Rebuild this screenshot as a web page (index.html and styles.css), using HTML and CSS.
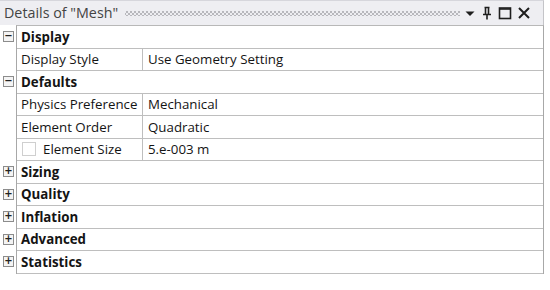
FILE: index.html
```html
<!DOCTYPE html>
<html>
<head>
<meta charset="utf-8">
<link rel="stylesheet" href="styles.css">
</head>
<body>
<div class="panel">
  <div class="titlebar">
    <span class="title">Details of "Mesh"</span>
    <span class="grip"></span>
    <div class="tools">
      <svg class="ico" width="12" height="12" viewBox="0 0 12 12"><path d="M1.5 4.5 H10.5 L6 9 Z" fill="#1e1e1e"/></svg>
      <svg class="ico" width="12" height="14" viewBox="0 0 12 14"><path d="M3.5 1.5 H8.5 M4.5 1.5 V8 M7.5 1.5 V8 M2 8.5 H10 M6 8.5 V13.5" stroke="#1e1e1e" stroke-width="1.6" fill="none"/></svg>
      <svg class="ico" width="14" height="14" viewBox="0 0 14 14"><rect x="1.5" y="2" width="11" height="10.5" stroke="#1e1e1e" stroke-width="1.6" fill="none"/><path d="M1.5 3 H12.5" stroke="#1e1e1e" stroke-width="1.6"/></svg>
      <svg class="ico" width="14" height="14" viewBox="0 0 14 14"><path d="M2 2 L12 12 M12 2 L2 12" stroke="#1e1e1e" stroke-width="2" fill="none"/></svg>
    </div>
  </div>
  <div class="body">
    <div class="grid">
      <div class="row head"><span class="box">&minus;</span><div class="cell full">Display</div></div>
      <div class="row"><div class="cell name">Display Style</div><div class="cell val">Use Geometry Setting</div></div>
      <div class="row head"><span class="box">&minus;</span><div class="cell full">Defaults</div></div>
      <div class="row"><div class="cell name">Physics Preference</div><div class="cell val">Mechanical</div></div>
      <div class="row"><div class="cell name">Element Order</div><div class="cell val">Quadratic</div></div>
      <div class="row"><div class="cell name"><span class="check"></span>Element Size</div><div class="cell val">5.e-003 m</div></div>
      <div class="row head"><span class="box">+</span><div class="cell full">Sizing</div></div>
      <div class="row head"><span class="box">+</span><div class="cell full">Quality</div></div>
      <div class="row head"><span class="box">+</span><div class="cell full">Inflation</div></div>
      <div class="row head"><span class="box">+</span><div class="cell full">Advanced</div></div>
      <div class="row head"><span class="box">+</span><div class="cell full">Statistics</div></div>
    </div>
  </div>
</div>
</body>
</html>
```

FILE: styles.css
```css
html, body {
  margin: 0;
  padding: 0;
  background: #ffffff;
}
body {
  font-family: "Open Sans", "Noto Sans", sans-serif;
  font-size: 13.3px;
  color: #141414;
  width: 550px;
  height: 290px;
  overflow: hidden;
}
.panel {
  width: 544px;
}
.titlebar {
  height: 24px;
  background: #eeeef2;
  border-top: 1px solid #d6d6dc;
  border-right: 1px solid #c4c4c8;
  display: flex;
  align-items: center;
  padding-left: 4px;
}
.title {
  font-size: 14.3px;
  color: #444444;
  white-space: nowrap;
  margin-top: -1px;
}
.grip {
  flex: 1;
  height: 5px;
  margin: 0 4px 0 7px;
  background-image:
    radial-gradient(circle, #b8b8bd 0.9px, transparent 1.1px),
    radial-gradient(circle, #b8b8bd 0.9px, transparent 1.1px);
  background-size: 4px 4px, 4px 4px;
  background-position: 0 -1px, 2px 1px;
}
.tools {
  display: flex;
  align-items: center;
  gap: 5px;
  padding-right: 12px;
}
.ico {
  display: block;
}
.body {
  padding-left: 16px;
  position: relative;
}
.grid {
  border-left: 1px solid #a8a8a8;
  border-right: 1px solid #a8a8a8;
  border-top: 1px solid #b8b8b8;
  background: #fff;
}
.row {
  height: 21.5px;
  border-bottom: 1.5px solid #bebebe;
  display: flex;
  align-items: stretch;
  position: relative;
}
.head .full {
  font-weight: 700;
  padding-left: 4px;
  display: flex;
  align-items: center;
}
.box {
  position: absolute;
  left: -14px;
  top: 5px;
  width: 9px;
  height: 9px;
  border: 1px solid #8c8c8c;
  background: #f4f4f4;
  font-size: 10px;
  line-height: 8px;
  text-align: center;
  font-weight: 700;
  color: #222;
  font-family: "DejaVu Sans", sans-serif;
}
.cell {
  display: flex;
  align-items: center;
  white-space: nowrap;
}
.name {
  width: 121px;
  padding-left: 4px;
  border-right: 1.5px solid #bebebe;
}
.val {
  padding-left: 5px;
}
.check {
  width: 12px;
  height: 12px;
  border: 1px solid #cfcfcf;
  background: #fff;
  margin-right: 7px;
  margin-left: 1px;
}
```
